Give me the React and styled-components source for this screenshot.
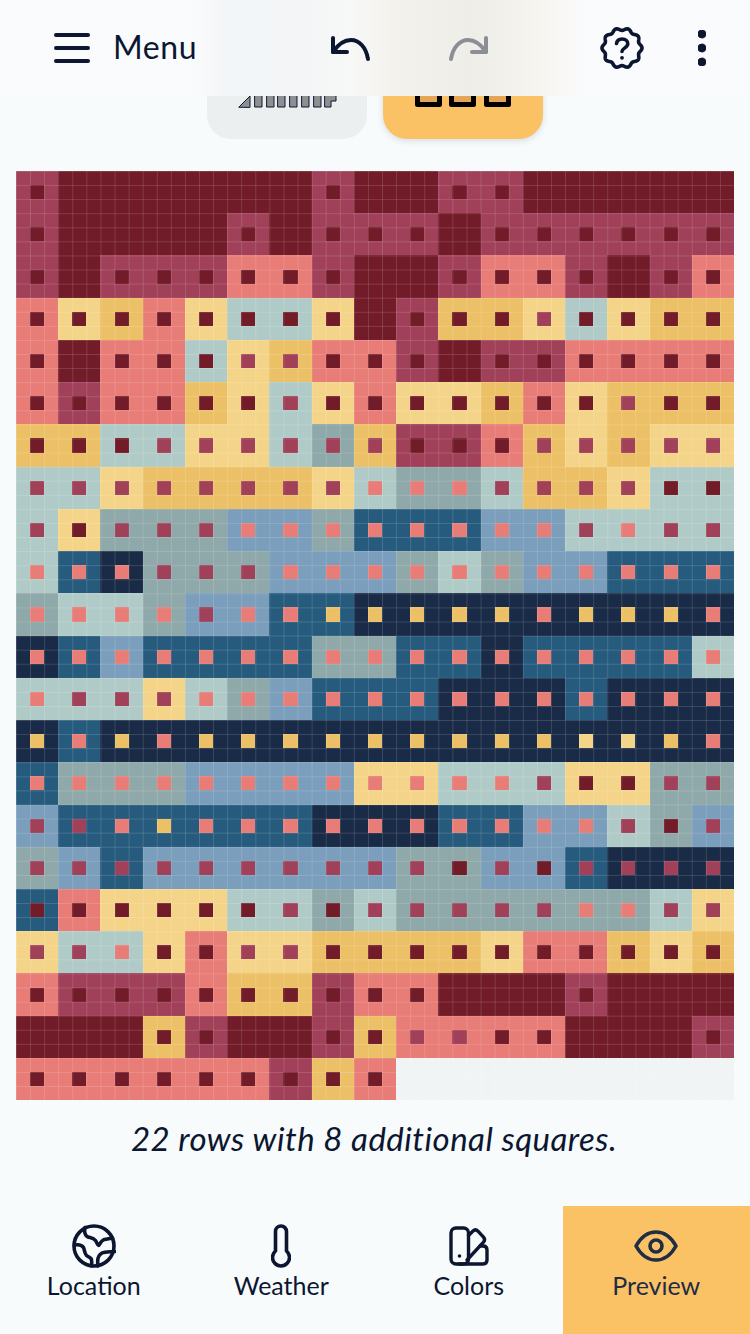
import React from "react";
import styled, { createGlobalStyle } from "styled-components";

const INK = "#0c1630";
const CELL = 718 / 17;
const SUB = CELL / 3;

const COLORS = {
  D: "#711c28",
  M: "#a04059",
  C: "#e87c77",
  Y: "#f4d488",
  O: "#ecc066",
  T: "#b0cbc7",
  G: "#8fa8a9",
  B: "#7a9ebb",
  S: "#265b7d",
  N: "#1a2b47",
};

const ROWS = [
  "MD DD DD DD DD DD DD MD DD DD MD MD DD DD DD DD DD",
  "MD DD DD DD DD MD DD MD MD MD DD MD MD MD MD MD MD",
  "MD DD MD MD MD CD CD MD DD DD MD CD CD MD DD MD CD",
  "CD YD OD CD YD TD TD YD DD MD OD OD YM TD YD OD OD",
  "CD DD CD CD TD YM OM CD CD MD DD MD MD CD CD CD CD",
  "CD MD CD CD OD YD TM YD CD YD YD OD CD YD OM OD OD",
  "OD OD TD TM YM YM TM GM OM MD MD CD OM YM OM YM YM",
  "TM TM YM OM OM OM OM YM TC GC GC TM OM OM YM TD TD",
  "TM YD GM GM GM BC BC GC SC SC SC BC BC TM TC TM TM",
  "TC SC NC GM GM GM BC BC BC GC TC GC BC BC SC SC SC",
  "GC TC TC GC BM BC SC SO NO NO NO NO NC NO NO NO NC",
  "NC SC BC SC SC SC SC GC GC SC SC NC SC SC SC SC TC",
  "TC TM TM YM TC GC BC SC SC SC NC NC NC SC NC NC NC",
  "NO SC NO NC NO NO NO NO NO NO NO NO NO NY NY NO NC",
  "SC GC GC GC BC BC BC BC YC YC TC TC TM YD YD GM GM",
  "BM SM SC SO SC SC SC NC NC NC SC SC BC BC TM GD BM",
  "GM BM SM BM BM BM BM BM BM GM GD BM BD SM NM NM NM",
  "SD CD YD YD YD TD TM GD TM GM GM GM GM GC GC TM YM",
  "YM TM TC YD CD YM YM OD OD OD OD YD CD CD OD YD OD",
  "CD MD MD MD CD OD OD MD CD CD DD DD DD MD DD DD DD",
  "DD DD DD OD MD DD DD MD OD CM CM CD CD DD DD DD MD",
  "CD CD CD CD CD CD MD OD CD",
];

const GlobalStyle = createGlobalStyle`
  html, body { margin: 0; padding: 0; background: #f7fbfc; }
  body { overflow: hidden; font-family: Lato, "Noto Sans", sans-serif; color: ${INK}; }
`;

const Page = styled.div`
  position: relative;
  width: 750px;
  height: 1334px;
  display: flex;
  flex-direction: column;
  overflow: hidden;
  background: #f7fbfc;
`;

const Header = styled.header`
  position: absolute;
  inset: 0 0 auto 0;
  height: 96px;
  z-index: 2;
  box-sizing: border-box;
  padding-left: 54px;
  display: grid;
  grid-template-columns: 276px 270px 1fr;
  align-items: center;
  background: linear-gradient(
    to right,
    #fafbfd 190px,
    #f3f6f8 225px,
    #f3f5f7 300px,
    #f7f8f7 350px,
    #f4f2ec 395px,
    #efede7 470px,
    #f3f2ec 520px,
    #f9f8f5 560px,
    #fafbfd 590px
  );
`;

const MenuGroup = styled.div`
  display: flex;
  align-items: center;
  gap: 23px;
`;

const MenuLabel = styled.span`
  font-size: 32px;
  line-height: 36px;
  padding-bottom: 3px;
  font-weight: 400;
  letter-spacing: 0.6px;
`;

const HistoryGroup = styled.div`
  display: flex;
  align-items: center;
  gap: 79px;
`;

const ActionGroup = styled.div`
  display: flex;
  align-items: center;
  gap: 54px;
`;

const ModeRow = styled.div`
  display: flex;
  justify-content: center;
  gap: 16px;
`;

const ModeButton = styled.div`
  width: 160px;
  height: 139px;
  border-radius: 0 0 24px 24px;
  box-sizing: border-box;
  padding-bottom: 32px;
  display: flex;
  align-items: flex-end;
  justify-content: center;
  background: ${(p) => (p.$active ? "#fac265" : "#eceff0")};
  box-shadow: ${(p) => (p.$active ? "0 2px 6px rgba(60, 70, 90, 0.16)" : "none")};
`;

const Board = styled.div`
  position: relative;
  margin: 32px 16px 0;
  width: 718px;
  display: grid;
  grid-template-columns: repeat(17, ${CELL}px);
  grid-auto-rows: ${CELL}px;
  background: #f0f4f5;

  &::after {
    content: "";
    position: absolute;
    inset: 0;
    pointer-events: none;
    background-image:
      linear-gradient(to right, rgba(255, 255, 255, 0.14) 1px, transparent 1px),
      linear-gradient(to bottom, rgba(255, 255, 255, 0.14) 1px, transparent 1px);
    background-size: ${SUB}px ${SUB}px;
  }
`;

const Cell = styled.div`
  display: flex;
  align-items: center;
  justify-content: center;
  background: ${(p) => p.$bg};
`;

const Dot = styled.div`
  width: ${SUB}px;
  height: ${SUB}px;
  background: ${(p) => p.$color};
`;

const Caption = styled.p`
  margin: 18px 0 0;
  text-align: center;
  font-style: italic;
  font-size: 33px;
  line-height: 40px;
  letter-spacing: 0.47px;
  padding-right: 2px;
`;

const TabBar = styled.nav`
  margin-top: auto;
  height: 128px;
  display: grid;
  grid-template-columns: repeat(4, 1fr);
`;

const Tab = styled.div`
  display: flex;
  flex-direction: column;
  align-items: center;
  padding-top: 18px;
  box-sizing: border-box;
  background: ${(p) => (p.$active ? "#fac265" : "transparent")};
  color: ${(p) => (p.$active ? "#1f2d45" : INK)};
`;

const TabIconSlot = styled.div`
  height: 44px;
  display: flex;
  align-items: center;
  justify-content: center;
`;

const TabLabel = styled.span`
  margin-top: -1px;
  font-size: 25px;
  line-height: 36px;
`;

const Svg = styled.svg`
  display: block;
  flex: none;
  fill: none;
  stroke: currentColor;
  stroke-linecap: round;
  stroke-linejoin: round;
`;

const Hamburger = () => (
  <Svg width="36" height="30" viewBox="0 0 36 30" strokeWidth="4">
    <path d="M2 2h32M2 15h32M2 28h32" />
  </Svg>
);

const Undo = () => (
  <Svg width="40" height="24" viewBox="0 0 40 24" strokeWidth="4" overflow="visible">
    <path d="M3 2v14h14" />
    <path d="M3 16C9 7 15 4 21 4c8 0 15 7 17 19" />
  </Svg>
);

const RedoWrap = styled.span`
  display: block;
  color: #8b8e96;
`;

const Redo = () => (
  <RedoWrap>
    <Svg width="40" height="24" viewBox="0 0 40 24" strokeWidth="4" overflow="visible">
      <path d="M37 2v14H23" />
      <path d="M37 16C31 7 25 4 19 4 11 4 4 11 2 23" />
    </Svg>
  </RedoWrap>
);

function scallopPath(cx, cy, r, amp, lobes) {
  const pts = [];
  const steps = 240;
  for (let i = 0; i < steps; i++) {
    const a = (i / steps) * Math.PI * 2;
    const rr = r + amp * Math.cos(lobes * a);
    pts.push(`${(cx + rr * Math.cos(a)).toFixed(2)} ${(cy + rr * Math.sin(a)).toFixed(2)}`);
  }
  return `M${pts.join("L")}Z`;
}

const HelpBadge = () => (
  <Svg width="44" height="44" viewBox="0 0 44 44" strokeWidth="3.6">
    <path d={scallopPath(22, 22, 18.8, 1.2, 10)} />
    <path d="M16.500 17.500c.4-2.800 2.700-4.500 5.700-4.500 3.200 0 5.600 2 5.600 4.800 0 3.800-5.600 4.200-5.800 7.700" />
    <circle cx="22" cy="31.800" r="1.900" fill="currentColor" stroke="none" />
  </Svg>
);

const Kebab = () => (
  <Svg width="8" height="36" viewBox="0 0 8 36" stroke="none">
    <circle cx="4" cy="4" r="4" fill="currentColor" />
    <circle cx="4" cy="18" r="4" fill="currentColor" />
    <circle cx="4" cy="32" r="4" fill="currentColor" />
  </Svg>
);

const StripIcon = () => (
  <Svg width="96" height="96" viewBox="0 0 96 96" stroke="none" overflow="visible">
    <g fill="#8e8f91">
      <path d="M0 96 11 85v11z" />
      {[16, 28, 39, 51, 63, 75].map((x) => (
        <rect key={x} x={x} y="80" width="7" height="16" />
      ))}
      <path d="M86 80h11v10h-5v6h-6z" />
    </g>
  </Svg>
);

const SquaresIcon = () => (
  <Svg width="96" height="96" viewBox="0 0 96 96" stroke="none">
    {[0, 34, 69].flatMap((x) =>
      [0, 34, 69].map((y) => (
        <rect key={`${x}-${y}`} x={x + 2.500} y={y + 2.500} width="22" height="22" fill="#e4a654" stroke="#000" strokeWidth="5" />
      ))
    )}
  </Svg>
);

const GlobeIcon = () => (
  <Svg width="44" height="44" viewBox="0 0 44 44" strokeWidth="3.6">
    <circle cx="22" cy="22" r="20" />
    <path d="M13 3.500c-1 4 0 8.500 3 9.500 3 1 5.500 1 7.500 3.500 1.500 2 2 5 3 5s2-4.500 5-5.700c3-.8 6-1.300 9-1.800" />
    <path d="M2.500 21c3.500-.5 7.500 0 9 2.500 1 2 1 6 3 8 1.500 1.500 4 1.500 4.800 3.500.5 1.500.5 4.500.5 7" />
    <path d="M42.500 27.500c-4 .5-9.500 0-12.500 1.500-3.500 2-4.300 5-4.300 8v5" />
  </Svg>
);

const ThermometerIcon = () => (
  <Svg width="20" height="44" viewBox="0 0 20 44" strokeWidth="3.6">
    <path d="M4.500 27V7.500a5.500 5.500 0 0 1 11 0V27a8.500 8.500 0 1 1-11 0Z" />
  </Svg>
);

const SwatchIcon = () => (
  <Svg width="40" height="40" viewBox="0 0 40 40" strokeWidth="3.4">
    <rect x="2" y="2" width="17.500" height="36" rx="5" />
    <circle cx="10.500" cy="30" r="1.800" fill="currentColor" stroke="none" />
    <path d="M19.500 9.500 24 5c1.500-1.400 3.500-1.300 5 .2l5.500 6c1.300 1.500 1.300 3.500 0 5L18 34" />
    <path d="M31 20h3c2.500 0 4 1.700 4 4v10c0 2.500-1.500 4-4 4H10" />
  </Svg>
);

const EyeIcon = () => (
  <Svg width="44" height="32" viewBox="0 0 44 32" strokeWidth="3.6">
    <path d="M2 16C7 7 14 2 22 2s15 5 20 14c-5 9-12 14-20 14S7 25 2 16Z" />
    <circle cx="22" cy="16" r="6" />
  </Svg>
);

const TABS = [
  { label: "Location", Icon: GlobeIcon },
  { label: "Weather", Icon: ThermometerIcon },
  { label: "Colors", Icon: SwatchIcon },
  { label: "Preview", Icon: EyeIcon, active: true },
];

export default function App() {
  return (
    <Page>
      <GlobalStyle />
      <Header>
        <MenuGroup>
          <Hamburger />
          <MenuLabel>Menu</MenuLabel>
        </MenuGroup>
        <HistoryGroup>
          <Undo />
          <Redo />
        </HistoryGroup>
        <ActionGroup>
          <HelpBadge />
          <Kebab />
        </ActionGroup>
      </Header>

      <ModeRow>
        <ModeButton>
          <StripIcon />
        </ModeButton>
        <ModeButton $active>
          <SquaresIcon />
        </ModeButton>
      </ModeRow>

      <Board>
        {ROWS.flatMap((row, r) =>
          row.split(" ").map((token, c) => (
            <Cell key={`${r}-${c}`} $bg={COLORS[token[0]]}>
              <Dot $color={COLORS[token[1]]} />
            </Cell>
          ))
        )}
      </Board>

      <Caption>22 rows with 8 additional squares.</Caption>

      <TabBar>
        {TABS.map(({ label, Icon, active }) => (
          <Tab key={label} $active={active}>
            <TabIconSlot>
              <Icon />
            </TabIconSlot>
            <TabLabel>{label}</TabLabel>
          </Tab>
        ))}
      </TabBar>
    </Page>
  );
}
